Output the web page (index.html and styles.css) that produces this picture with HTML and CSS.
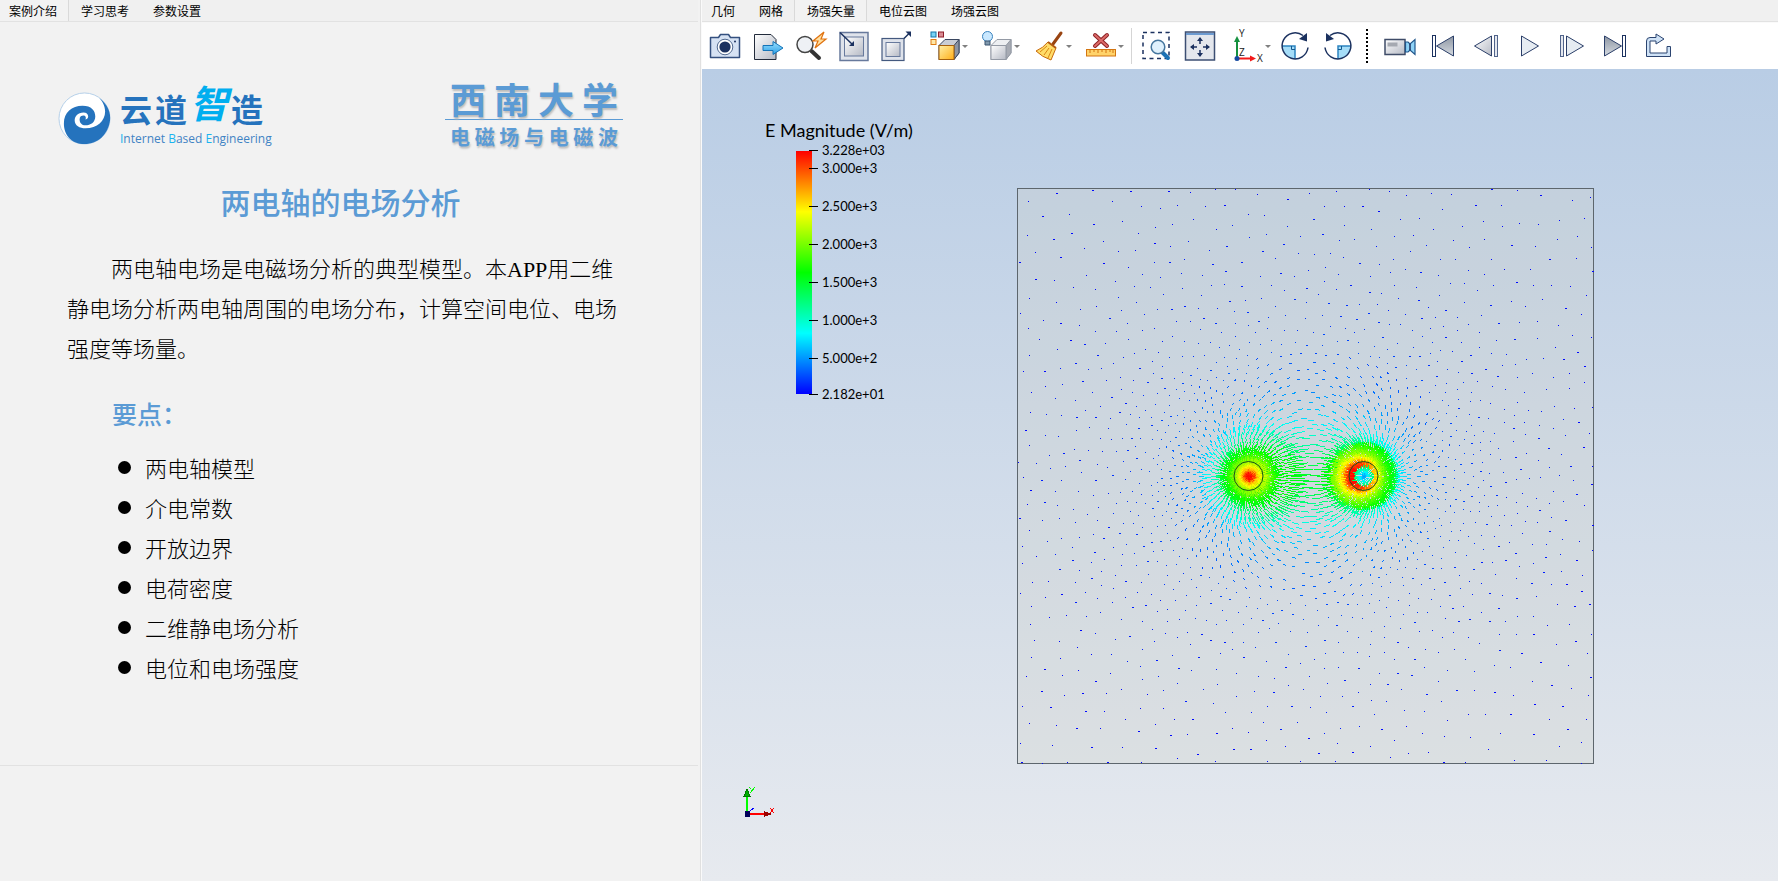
FILE: index.html
```html
<!DOCTYPE html>
<html lang="zh-CN">
<head>
<meta charset="utf-8">
<title>两电轴的电场分析</title>
<link rel="stylesheet" href="styles.css">
</head>
<body>
<main class="app">
  <section class="pane intro">
    <nav class="tabs" aria-label="说明">
      <button class="tab tab-active" type="button">案例介绍</button>
      <button class="tab" type="button">学习思考</button>
      <button class="tab" type="button">参数设置</button>
    </nav>
    <article class="doc">
      <header class="logos">
        <div class="brand">
          <svg class="brand-mark" viewBox="0 0 54 54" aria-hidden="true">
            <circle cx="27" cy="27" r="26" fill="#fff" stroke="#b4cfe9"/>
            <path d="M42 6 C51 13 54 21 53 29 C51 43 41 53 27 53 C14 53 6 44 6 32 C6 21 14 14 25 14 C34 14 38 19 38 25 C38 31 33 34 28 34 C24 34 22 31 22 28 C22 25 24 24 26 24 C28 24 29 26 28 28 C32 28 32 21 26 21 C20 21 17 25 17 29 C17 34 22 37 28 37 C40 37 48 29 48 20 C48 14 45 9 42 6Z" fill="#2573bd"/>
          </svg>
          <div>
            <div class="brand-name"><span>云</span><span>道</span><span class="brand-big">智</span><span>造</span></div>
            <div class="brand-sub"><b>I</b>nternet <b>B</b>ased <b>E</b>ngineering</div>
          </div>
        </div>
        <div class="school">
          <div class="school-name"><span>西</span><span>南</span><span>大</span><span>学</span></div>
          <div class="school-course"><span>电</span><span>磁</span><span>场</span><span>与</span><span>电</span><span>磁</span><span>波</span></div>
        </div>
      </header>
      <h1 class="title">两电轴的电场分析</h1>
      <p class="lead">两电轴电场是电磁场分析的典型模型。本APP用二维静电场分析两电轴周围的电场分布，计算空间电位、电场强度等场量。</p>
      <h2 class="subtitle">要点：</h2>
      <ul class="points">
        <li>两电轴模型</li>
        <li>介电常数</li>
        <li>开放边界</li>
        <li>电荷密度</li>
        <li>二维静电场分析</li>
        <li>电位和电场强度</li>
      </ul>
    </article>
  </section>

  <section class="pane viewer">
    <nav class="tabs" aria-label="视图">
      <button class="tab" type="button">几何</button>
      <button class="tab" type="button">网格</button>
      <button class="tab tab-active" type="button">场强矢量</button>
      <button class="tab" type="button">电位云图</button>
      <button class="tab" type="button">场强云图</button>
    </nav>
    <div class="toolbar" role="toolbar">
      <svg width="0" height="0" class="defs" aria-hidden="true">
        <defs>
          <linearGradient id="steel" x1="0" y1="0" x2="1" y2="1"><stop offset="0" stop-color="#fff"/><stop offset="1" stop-color="#b5b9c4"/></linearGradient>
          <linearGradient id="dark" x1="0" y1="0" x2="0" y2="1"><stop offset="0" stop-color="#8d96a3"/><stop offset="1" stop-color="#d5dae0"/></linearGradient>
          <linearGradient id="sky" x1="0" y1="0" x2="0" y2="1"><stop offset="0" stop-color="#9be0ff"/><stop offset="1" stop-color="#2a9fe6"/></linearGradient>
          <linearGradient id="gold" x1="0" y1="0" x2="1" y2="1"><stop offset="0" stop-color="#fff0a8"/><stop offset="1" stop-color="#ffae17"/></linearGradient>
        </defs>
      </svg>
      <button class="tool" type="button" aria-label="截图"><svg viewBox="0 0 32 32"><path d="M1.500 7.500H9.500L11.500 4.500H19.500L21.500 7.500H30.500V27.500H1.500Z" fill="#d6e2f3" stroke="#34507f" stroke-width="1.500" stroke-linejoin="round"/><circle cx="16" cy="17" r="7.800" fill="#fff" stroke="#51698f"/><circle cx="16" cy="17" r="5.600" fill="#1b315f"/><circle cx="26" cy="11.500" r="1" fill="#1b315f"/></svg></button>
      <button class="tool" type="button" aria-label="导出"><svg viewBox="0 0 32 32"><path d="M2.500 4.500H19L24 9.500V29.500H2.500Z" fill="url(#steel)" stroke="#222b3b"/><path d="M11 15.500H21V11.500L31 18L21 24.500V20.500H11Z" fill="url(#sky)" stroke="#1474b8"/></svg></button>
      <button class="tool" type="button" aria-label="快速缩放"><svg viewBox="0 0 32 32"><path d="M16.500 21L24 28" stroke="#333" stroke-width="4" stroke-linecap="round"/><circle cx="10" cy="14.500" r="8" fill="#eef1f5" stroke="#444" stroke-width="1.500"/><path d="M29 2L18 11H23L20 18L31 9H26Z" fill="#ffe0a0" stroke="#e07210" stroke-width="1.200"/></svg></button>
      <button class="tool" type="button" aria-label="适应窗口"><svg viewBox="0 0 32 32"><rect x="2" y="2.500" width="28" height="28" fill="#dfe3eb" stroke="#67799c" stroke-width="1.500"/><rect x="6.500" y="7" width="19" height="19" fill="url(#steel)" stroke="#67799c"/><path d="M2 2.500L15 15" stroke="#1b315f" stroke-width="1.500"/><path d="M16 16V11L11 16Z" fill="#1b315f"/></svg></button>
      <button class="tool" type="button" aria-label="放大"><svg viewBox="0 0 32 32"><rect x="1" y="8.500" width="22" height="22" fill="#dfe3eb" stroke="#44597f" stroke-width="1.200"/><rect x="5" y="12.500" width="14" height="14" fill="url(#steel)" stroke="#67799c"/><path d="M23 8.500L28 3.500" stroke="#1b315f" stroke-width="1.500"/><path d="M30 1.500V7L24.500 1.500Z" fill="#1b315f"/></svg></button>
      <button class="tool tool-drop" type="button" aria-label="选择模式"><svg viewBox="0 0 32 32"><rect x="2" y="2" width="5" height="5" fill="#76d2f5" stroke="#1474a8"/><rect x="9.500" y="2" width="5" height="5" fill="#d98b93" stroke="#8d1d29"/><rect x="2" y="9.500" width="5" height="5" fill="#ffe7a6" stroke="#de7c14"/><path d="M10 15.500L16 9.500H30V23L25 29.500H10Z" fill="#c9cdd5" stroke="#39465f"/><path d="M25 15.500L30 9.500V23L25 29.500Z" fill="#8d95a3" stroke="#39465f"/><rect x="10" y="15.500" width="15" height="14" fill="url(#gold)" stroke="#a5600d"/></svg></button>
      <button class="tool tool-drop" type="button" aria-label="光照"><svg viewBox="0 0 32 32"><path d="M10 15.500L16 9.500H30V23L25 29.500H10Z" fill="#edeff2" stroke="#949aa5"/><path d="M25 15.500L30 9.500V23L25 29.500Z" fill="#a7abb4" stroke="#949aa5"/><rect x="10" y="15.500" width="15" height="14" fill="url(#steel)" stroke="#949aa5"/><circle cx="6.500" cy="6.500" r="5" fill="#c9e8ff" stroke="#3b83bd"/><path d="M4 11H9V15H4Z" fill="#8199ad" stroke="#39536e"/></svg></button>
      <button class="tool tool-drop" type="button" aria-label="清除"><svg viewBox="0 0 32 32"><path d="M28 3L20 14" stroke="#994411" stroke-width="3" stroke-linecap="round"/><path d="M15 12L23 18L18 30Q9 27 3 21Q10 18 15 12Z" fill="#ffdc68" stroke="#c86a0c"/><path d="M14 16L7 22M16 18L11 25M19 19L15 28" stroke="#d98514"/><path d="M15 12L23 18" stroke="#b25a12" stroke-width="2"/></svg></button>
      <button class="tool tool-drop" type="button" aria-label="删除测量"><svg viewBox="0 0 32 32"><path d="M10 5L22 16M22 5L10 16" stroke="#8b2024" stroke-width="4" stroke-linecap="round"/><path d="M10 5L22 16M22 5L10 16" stroke="#dc6a68" stroke-width="2" stroke-linecap="round"/><rect x="1.500" y="19.500" width="29" height="6.500" fill="#ffd36a" stroke="#d37511"/><path d="M5 20V23M9 20V22M13 20V23M17 20V22M21 20V23M25 20V22M28 20V23" stroke="#d37511"/></svg></button>
      <span class="sep"></span>
      <button class="tool" type="button" aria-label="框选缩放"><svg viewBox="0 0 32 32"><rect x="2" y="2.500" width="26" height="26" fill="none" stroke="#1b315f" stroke-width="1.500" stroke-dasharray="4 3.500"/><path d="M21 22L27 28" stroke="#1c72b5" stroke-width="4" stroke-linecap="round"/><circle cx="17" cy="17" r="6.800" fill="#dff1fd" stroke="#46779f" stroke-width="1.500"/></svg></button>
      <button class="tool" type="button" aria-label="平移"><svg viewBox="0 0 32 32"><rect x="1.500" y="2" width="29" height="28" fill="#e4e7ed" stroke="#3d4f73" stroke-width="1.500"/><path d="M2 4H30" stroke="#6d9bd0" stroke-width="2"/><path d="M16 8V14M16 20V26M7 17H13M19 17H25" stroke="#1b315f" stroke-width="1.500"/><path d="M16 7L19 11H13ZM16 27L19 23H13ZM6 17L10 14V20ZM26 17L22 14V20Z" fill="#1b315f"/></svg></button>
      <button class="tool tool-drop" type="button" aria-label="视角"><svg viewBox="0 0 32 32"><path d="M5 28V10" stroke="#16913f" stroke-width="2"/><path d="M5 6L8 12H2Z" fill="#16913f"/><path d="M5 28.500H19" stroke="#f31919" stroke-width="2"/><path d="M24 28.500L18 25.500V31.500Z" fill="#f31919"/><circle cx="5" cy="28.500" r="2.500" fill="#164aa0"/><text class="axis-label" x="7" y="7">Y</text><text class="axis-label" x="7" y="26">Z</text><text class="axis-label" x="25" y="32">X</text></svg></button>
      <button class="tool" type="button" aria-label="顺时针旋转"><svg viewBox="0 0 32 32"><path d="M16 16V29A13 13 0 0 1 3 16Z" fill="#a5ddf8"/><path d="M3 16H16V29" fill="none" stroke="#2c84c0" stroke-width="1.500"/><path d="M12.500 16V19.500H16" fill="none" stroke="#14598f"/><path d="M29 17.500A13 13 0 1 1 24 5.500" fill="none" stroke="#1b315f" stroke-width="1.500"/><path d="M28 3V11.500L20 9Z" fill="#1b315f"/></svg></button>
      <button class="tool" type="button" aria-label="逆时针旋转"><svg viewBox="0 0 32 32"><path d="M16 16V29A13 13 0 0 0 29 16Z" fill="#a5ddf8"/><path d="M29 16H16V29" fill="none" stroke="#2c84c0" stroke-width="1.500"/><path d="M19.500 16V19.500H16" fill="none" stroke="#14598f"/><path d="M3 17.500A13 13 0 1 0 8 5.500" fill="none" stroke="#1b315f" stroke-width="1.500"/><path d="M4 3V11.500L12 9Z" fill="#1b315f"/></svg></button>
      <span class="grip"></span>
      <button class="tool" type="button" aria-label="录制"><svg viewBox="0 0 32 32"><rect x="1" y="9.500" width="20" height="15" fill="url(#steel)" stroke="#3f4c68" stroke-width="1.500"/><rect x="3.500" y="12.500" width="10" height="4" fill="#a5a9b1"/><path d="M21.500 12H24L26 14L31 9.500V24.500L26 20L24 22H21.500Z" fill="#8fd3f7" stroke="#21568b" stroke-width="1.200"/><path d="M26 14V20" stroke="#1b315f" stroke-width="1.500"/></svg></button>
      <button class="tool" type="button" aria-label="首帧"><svg viewBox="0 0 32 32"><rect x="5.500" y="5.500" width="3" height="21" fill="#fff" stroke="#1b315f"/><path d="M26.500 6V26L9.500 16Z" fill="url(#dark)" stroke="#2b3f69"/></svg></button>
      <button class="tool" type="button" aria-label="上一帧"><svg viewBox="0 0 32 32"><path d="M21.500 6V26L4.500 16Z" fill="url(#steel)" stroke="#2b3f69"/><rect x="24.500" y="5.500" width="3" height="21" fill="#e4e8ef" stroke="#51648b"/></svg></button>
      <button class="tool" type="button" aria-label="播放"><svg viewBox="0 0 32 32"><path d="M8.500 6V26L25.500 16Z" fill="#e6ecf2" stroke="#2b3f69"/></svg></button>
      <button class="tool" type="button" aria-label="下一帧"><svg viewBox="0 0 32 32"><rect x="4.500" y="5.500" width="3" height="21" fill="#e4e8ef" stroke="#51648b"/><path d="M10.500 6V26L27.500 16Z" fill="#e6ecf2" stroke="#2b3f69"/></svg></button>
      <button class="tool" type="button" aria-label="末帧"><svg viewBox="0 0 32 32"><path d="M5.500 6V26L22.500 16Z" fill="url(#dark)" stroke="#2b3f69"/><rect x="23.500" y="5.500" width="3" height="21" fill="#fff" stroke="#1b315f"/></svg></button>
      <button class="tool" type="button" aria-label="循环"><svg viewBox="0 0 32 32"><path d="M4.500 26V11Q4.500 7.500 8 7.500H14V4L22 9L14 14V11H8V23H25V16.500H28.500V26.500H4.500Z" fill="#cfe2f6" stroke="#2b4470" stroke-linejoin="round"/></svg></button>
    </div>
    <div class="scene">
      <svg class="scene-svg" viewBox="0 0 1076 812" role="img" aria-label="E Magnitude">
        <defs>
          <linearGradient id="rainbow" x1="0" y1="0" x2="0" y2="1"><stop offset="0" stop-color="#f00"/><stop offset=".25" stop-color="#ff0"/><stop offset=".5" stop-color="#0f0"/><stop offset=".75" stop-color="#0ff"/><stop offset="1" stop-color="#00f"/></linearGradient>
          <radialGradient id="core"><stop offset="0" stop-color="#f00"/><stop offset=".14" stop-color="#ff2a00"/><stop offset=".28" stop-color="#ffb000"/><stop offset=".45" stop-color="#f4f000"/><stop offset=".7" stop-color="#8cf000"/><stop offset="1" stop-color="#20f000"/></radialGradient>
        </defs>
        <text class="legend-title" x="63" y="68">E Magnitude (V/m)</text>
        <rect x="94" y="82" width="16" height="243" fill="url(#rainbow)"/>
        <path class="tick" d="M107 81.500H116M107 99.500H116M107 137.500H116M107 175.500H116M107 213.500H116M107 251.500H116M107 289.500H116M107 325.500H116"/>
        <g class="legend-label">
          <text x="120" y="86">3.228e+03</text>
          <text x="120" y="104">3.000e+3</text>
          <text x="120" y="142">2.500e+3</text>
          <text x="120" y="180">2.000e+3</text>
          <text x="120" y="218">1.500e+3</text>
          <text x="120" y="256">1.000e+3</text>
          <text x="120" y="294">5.000e+2</text>
          <text x="120" y="330">2.182e+01</text>
        </g>
        <rect class="domain" x="315.500" y="119.500" width="576" height="575"/>
        <circle cx="546.500" cy="407" r="21" fill="url(#core)"/>
        <g id="field"></g>
        <circle class="electrode" cx="546.500" cy="407" r="14.500"/>
        <circle class="electrode" cx="661.500" cy="407" r="14.500"/>
        <g class="triad" shape-rendering="crispEdges">
          <path d="M45 744V728" stroke="#0f0" stroke-width="2"/><path d="M45 720L48 727H42Z" fill="#0a0" stroke="#070"/>
          <path d="M46 745H64" stroke="#f00" stroke-width="2"/><path d="M70 745L62 742V748Z" fill="#900"/>
          <rect x="43" y="742" width="5" height="6" fill="#00005a"/>
          <path d="M48 742L52 739" stroke="#00f"/>
          <path d="M47 718L49 720M53 718L48 724" stroke="#0f0" fill="none"/>
          <path d="M68 739L72 744M72 739L68 744" stroke="#f00"/>
        </g>
      </svg>
    </div>
  </section>
</main>
<script src="field.js"></script>
</body>
</html>
```
FILE: styles.css
```css
* { box-sizing: border-box; }

body {
  margin: 0;
  background: #f0f0f0;
  color: #000;
  font-family: "Liberation Sans", "Noto Sans CJK SC", sans-serif;
}

.app {
  display: grid;
  grid-template-columns: 698fr 1076fr;
  gap: 4px;
  min-height: 100vh;
  background: #f2f2f2;
}

.pane { display: flex; flex-direction: column; min-width: 0; }
.viewer { box-shadow: -1px 0 #fafafa, -2px 0 #e0e0e0; }

.tabs {
  display: flex;
  height: 22px;
  border-bottom: 1px solid #e2e2e2;
  background: #f0f0f0;
}
.tab {
  padding: 0 11px 0 12px;
  border: 0;
  border-right: 1px solid transparent;
  background: none;
  font: 12px/20px "Noto Sans CJK SC", sans-serif;
  color: #000;
}
.tab:first-child { padding-left: 9px; }
.tab-active { border-right-color: #d9d9d9; background: #f2f2f2; }
.viewer .tab-active { box-shadow: -1px 0 #d9d9d9; }

.doc {
  padding: 54px 75px 78px 58px;
  border-bottom: 1px solid #e2e2e2;
}
.logos {
  display: flex;
  justify-content: space-between;
  align-items: flex-end;
}
.brand { display: flex; align-items: flex-end; gap: 9px; padding-bottom: 6px; }
.brand-mark { width: 53px; height: 53px; margin-bottom: 3px; }
.brand-name {
  display: flex;
  align-items: flex-end;
  gap: 3px;
  height: 54px;
  font: 700 32px/44px "Noto Sans CJK SC", sans-serif;
  color: #2573bd;
}
.brand-big { font-size: 38px; line-height: 56px; font-style: italic; color: #00aeef; }
.brand-sub {
  font: 12px/18px "Open Sans", sans-serif;
  color: #3f83c4;
}
.brand-sub b { font-weight: 400; color: #19b4f0; }

.school {
  width: 178px;
  color: #5b9bd5;
  font-family: "Noto Sans CJK SC", sans-serif;
  font-weight: 700;
  text-shadow: 1px 2px 2px #bbbbbb;
}
.school-name {
  display: flex;
  justify-content: space-between;
  padding: 0 5px;
  border-bottom: 1px solid #5b9bd5;
  font-size: 36px;
  line-height: 42px;
}
.school-course {
  display: flex;
  justify-content: space-between;
  padding: 0 5px;
  font-size: 20px;
  line-height: 34px;
}

.title {
  margin: 27px 0 29px;
  color: #5b9bd5;
  font: 500 30px/40px "Noto Sans CJK SC", sans-serif;
  text-align: center;
}
.lead {
  margin: 0 0 23px 9px;
  font: 300 22px/40px "Liberation Serif", "Noto Sans CJK SC", sans-serif;
  text-indent: 2em;
}
.subtitle {
  margin: 0 0 14px 54px;
  color: #5b9bd5;
  font: 500 25px/40px "Noto Sans CJK SC", sans-serif;
}
.points {
  margin: 0;
  padding: 0 0 0 60px;
  list-style: none;
  font: 300 22px/40px "Noto Sans CJK SC", sans-serif;
}
.points li { display: flex; align-items: center; gap: 14px; }
.points li::before {
  content: "";
  width: 13px;
  height: 13px;
  border-radius: 50%;
  background: #000;
}

.toolbar {
  display: flex;
  align-items: center;
  height: 47px;
  padding-left: 1px;
  border-top: 1px solid #fafafa;
  background: #fff;
}
.defs { position: absolute; }
.tool {
  display: flex;
  align-items: center;
  justify-content: center;
  width: 43px;
  height: 40px;
  padding: 0;
  border: 0;
  background: none;
}
.tool svg { flex: none; width: 32px; height: 32px; overflow: visible; }
.tool-drop { width: 52px; padding: 0 2px 0 11px; gap: 1px; }
.tool-drop::after {
  content: "";
  border: 3px solid transparent;
  border-top-color: #808080;
  border-bottom: 0;
}
.axis-label { font: 10px "Open Sans", sans-serif; fill: #222; }
.sep { width: 1px; height: 36px; margin: 0 3px 0 5px; background: #d5d5d5; }
.grip {
  width: 2px;
  height: 34px;
  margin: 0 10px 0 7px;
  background: repeating-linear-gradient(#000 0 2px, #fff 2px 4px);
}

.scene {
  flex: 1;
  min-height: 0;
  background: linear-gradient(#b9cde5, #e7eaef);
}
.scene-svg { display: block; width: 100%; height: auto; }
.legend-title { font: 18px Lato, sans-serif; }
.legend-label { font: 13px Lato, sans-serif; }
.tick { stroke: #000; fill: none; }
.domain { fill: rgba(206, 206, 195, 0.27); stroke: #5d666d; }
.electrode { fill: none; stroke: #17521c; stroke-width: 1; }
```
FILE: field.js
```js
(function () {
  var BOX = { x: 316, y: 120, w: 575, h: 574 };
  var A = { x: 546.5, y: 407 };
  var B = { x: 661.5, y: 407 };
  var R = 14.5;
  var BINS = 48;
  var bins = [];
  var seed = 20231;

  function rand() {
    seed = (seed * 1664525 + 1013904223) % 4294967296;
    return seed / 4294967296;
  }

  function ramp(t, stops) {
    for (var i = 1; i < stops.length; i++) {
      if (t <= stops[i][0]) {
        var a = stops[i - 1], b = stops[i];
        return a[1] + (b[1] - a[1]) * Math.max(0, t - a[0]) / (b[0] - a[0]);
      }
    }
    return stops[stops.length - 1][1];
  }

  // Field direction of two opposite line charges and normalised magnitude.
  function field(x, y) {
    var ax = x - A.x, ay = y - A.y, bx = x - B.x, by = y - B.y;
    var ra = Math.hypot(ax, ay) + 0.01, rb = Math.hypot(bx, by) + 0.01;
    var ex = ax / (ra * ra) - bx / (rb * rb);
    var ey = ay / (ra * ra) - by / (rb * rb);
    var e = Math.hypot(ex, ey);
    var m = Math.min(e * 13, 0.48);
    if (ra < 27) {
      m = ramp(ra - ax * 0.15, [[0, 1], [3, 0.97], [6, 0.82], [10, 0.72], [14, 0.63], [20, 0.53], [28, 0.45], [34, 0.4]]);
    } else if (rb < R) {
      m = ramp(rb, [[0, 0.12], [5, 0.22], [9, 0.35], [14.5, 0.48]]);
    } else if (rb < 36) {
      m = ramp(rb + bx * 0.22, [[11, 1], [14, 0.94], [18, 0.78], [23, 0.66], [30, 0.56], [36, 0.5], [42, 0.43]]);
    }
    return { ux: ex / e, uy: ey / e, m: m, ra: ra, rb: rb };
  }

  function arrow(x, y) {
    var f = field(x, y);
    var len = Math.max(1, f.m * 23);
    if (f.ra < 36 || f.rb < 38) len = Math.min(len, 5);
    if (f.ra < 12 || f.rb < R) len = 2;
    var k = Math.min(BINS - 1, Math.floor(f.m * BINS));
    var x0 = Math.round(x), y0 = Math.round(y);
    if (len < 1.8) {
      bins[k] = (bins[k] || "") + "M" + x0 + " " + (y0 + 0.5) + (rand() < 0.25 ? "h2" : "h1");
    } else {
      bins[k] = (bins[k] || "") + "M" + (x0 + 0.5) + " " + (y0 + 0.5) +
        "l" + (f.ux * len).toFixed(1) + " " + (f.uy * len).toFixed(1);
    }
  }

  // Concentric node rings of the refined mesh around each electrode.
  function rings(c, outer, core) {
    for (var r = 0.5; r < outer; r += ramp(r, [[0, 1.3], [core, 1.8], [core + 8, 4], [60, 5]])) {
      var n = Math.max(5, Math.round(2 * Math.PI * r / ramp(r, [[0, 1.2], [core, 1.8], [core + 8, 3.4], [60, 5.5]])));
      var shift = rand() * 6;
      for (var i = 0; i < n; i++) {
        var t = shift + 2 * Math.PI * i / n;
        arrow(c.x + r * Math.cos(t), c.y + r * Math.sin(t));
      }
    }
  }
  rings(A, 46, 24);
  rings(B, 46, 33);

  // Nodes spread with a spacing that grows away from the electrodes.
  var nodes = [], cell = 20, grid = {};
  for (var i = 0; i < 90000; i++) {
    var x = BOX.x + rand() * BOX.w, y = BOX.y + rand() * BOX.h;
    var d = Math.min(Math.hypot(x - A.x, y - A.y), Math.hypot(x - B.x, y - B.y));
    if (d < 47) continue;
    var gap = ramp(d, [[46, 4.2], [100, 7.5], [170, 11.5], [300, 18]]);
    var gx = Math.floor(x / cell), gy = Math.floor(y / cell), free = true;
    for (var a = gx - 1; a <= gx + 1 && free; a++) {
      for (var b = gy - 1; b <= gy + 1 && free; b++) {
        (grid[a + "," + b] || []).forEach(function (p) {
          if (Math.hypot(p[0] - x, p[1] - y) < gap) free = false;
        });
      }
    }
    if (!free) continue;
    var key = gx + "," + gy;
    (grid[key] = grid[key] || []).push([x, y]);
    nodes.push([x, y]);
  }
  nodes.forEach(function (p) { arrow(p[0], p[1]); });

  var host = document.getElementById("field");
  bins.forEach(function (d, k) {
    var path = document.createElementNS("http://www.w3.org/2000/svg", "path");
    path.setAttribute("d", d);
    path.setAttribute("fill", "none");
    path.setAttribute("shape-rendering", "crispEdges");
    path.setAttribute("stroke", "hsl(" + Math.round(240 * (1 - (k + 0.5) / BINS)) + ",100%,50%)");
    host.appendChild(path);
  });
})();
```
